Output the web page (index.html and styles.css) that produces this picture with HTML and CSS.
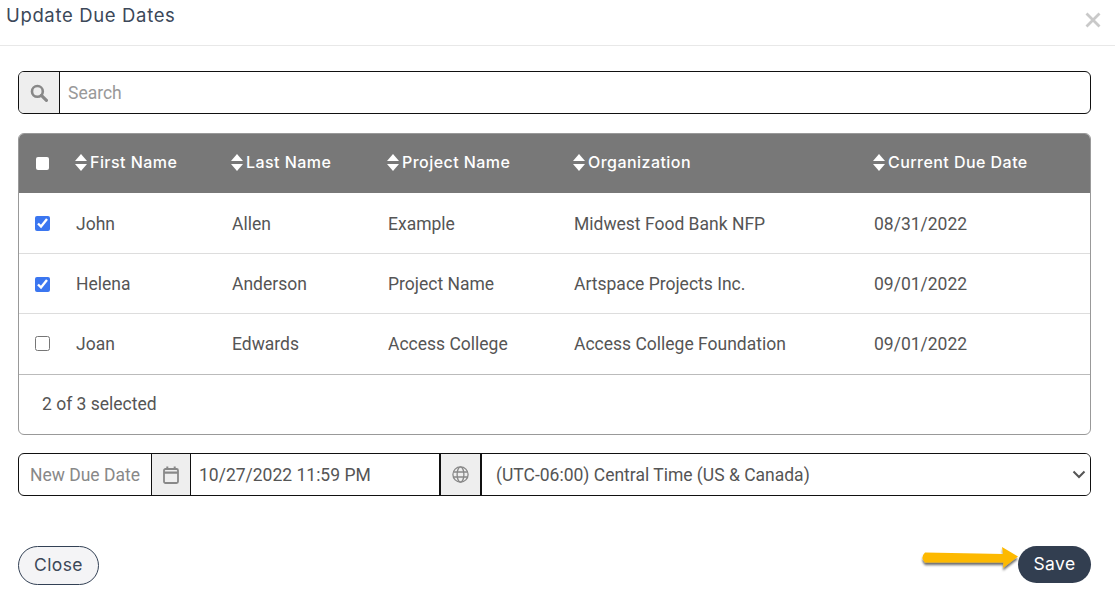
FILE: index.html
```html
<!DOCTYPE html>
<html lang="en">
<head>
    <meta charset="UTF-8">
    <meta name="viewport" content="width=device-width, initial-scale=1.0">
    <title>Update Due Dates</title>
    <link rel="stylesheet" href="styles.css">
</head>
<body>

    <header class="modal-header">
        <h1 class="modal-title">Update Due Dates</h1>
        <button class="close-x" type="button" aria-label="Close">
            <svg width="16" height="16" viewBox="0 0 16 16"><path d="M1.500 1.500 14.500 14.500M14.500 1.500 1.500 14.500" stroke="#c9c9c9" stroke-width="2.8" fill="none"/></svg>
        </button>
    </header>

    <main class="modal-body">
        <div class="input-group search-group">
            <span class="addon addon-search">
                <svg width="18" height="18" viewBox="0 0 18 18"><circle cx="7.400" cy="7.400" r="5.400" fill="none" stroke="#888" stroke-width="2.600"/><path d="M11.400 11.400 16.400 16.400" stroke="#888" stroke-width="3.200" stroke-linecap="round"/></svg>
            </span>
            <input class="group-input" type="text" placeholder="Search">
        </div>

        <div class="table-card">
            <table class="grid">
                <thead>
                    <tr>
                        <th class="col-check"><input class="head-check" type="checkbox"></th>
                        <th class="col-first"><span class="sort"></span>First Name</th>
                        <th class="col-last"><span class="sort"></span>Last Name</th>
                        <th class="col-project"><span class="sort"></span>Project Name</th>
                        <th class="col-org"><span class="sort"></span>Organization</th>
                        <th><span class="sort"></span>Current Due Date</th>
                    </tr>
                </thead>
                <tbody>
                    <tr>
                        <td><input class="row-check" type="checkbox" checked></td>
                        <td>John</td>
                        <td>Allen</td>
                        <td>Example</td>
                        <td>Midwest Food Bank NFP</td>
                        <td>08/31/2022</td>
                    </tr>
                    <tr>
                        <td><input class="row-check" type="checkbox" checked></td>
                        <td>Helena</td>
                        <td>Anderson</td>
                        <td>Project Name</td>
                        <td>Artspace Projects Inc.</td>
                        <td>09/01/2022</td>
                    </tr>
                    <tr>
                        <td><input class="row-check" type="checkbox"></td>
                        <td>Joan</td>
                        <td>Edwards</td>
                        <td>Access College</td>
                        <td>Access College Foundation</td>
                        <td>09/01/2022</td>
                    </tr>
                </tbody>
            </table>
            <div class="table-footer">2 of 3 selected</div>
        </div>

        <div class="input-group date-group">
            <span class="addon-label">New Due Date</span>
            <span class="addon addon-cal">
                <svg width="16" height="18" viewBox="0 0 16 18"><rect x="1" y="3" width="14" height="14" rx="1.500" fill="#eee" stroke="#888" stroke-width="1.800"/><path d="M1 6.600H15" stroke="#888" stroke-width="2.200"/><path d="M4.300 .5V3.500M11.700 .5V3.500" stroke="#888" stroke-width="2"/></svg>
            </span>
            <input class="group-input date-input" type="text" value="10/27/2022 11:59 PM">
            <span class="addon addon-globe">
                <svg width="17" height="17" viewBox="0 0 17 17" fill="none" stroke="#888" stroke-width="1.300"><circle cx="8.500" cy="8.500" r="7.600"/><ellipse cx="8.500" cy="8.500" rx="3.400" ry="7.600"/><path d="M1.400 6H15.600M1.400 11H15.600"/></svg>
            </span>
            <div class="tz-wrap">
                <select class="tz-select">
                    <option>(UTC-06:00) Central Time (US &amp; Canada)</option>
                </select>
                <svg class="tz-chevron" width="14" height="9" viewBox="0 0 14 9"><path d="M1.500 1.500 7 7 12.500 1.500" fill="none" stroke="#555" stroke-width="2"/></svg>
            </div>
        </div>
    </main>

    <footer class="modal-footer">
        <button class="btn btn-close" type="button">Close</button>
        <button class="btn btn-save" type="button">Save</button>
        <!-- arrow pointing at the save button -->
        <svg class="arrow" width="102" height="34" viewBox="0 0 102 34">
            <defs>
                <filter id="arrowShadow" x="-10%" y="-30%" width="120%" height="170%">
                    <feDropShadow dx="0" dy="2.500" stdDeviation="1.300" flood-color="#000" flood-opacity="0.6"/>
                </filter>
            </defs>
            <path d="M6 10.500 84 12 83 5 99 14.500 84 26 84.500 20.500 6 20.500Q1 15.500 6 10.500Z" fill="#fdb900" filter="url(#arrowShadow)"/>
        </svg>
    </footer>

</body>
</html>
```

FILE: styles.css
```css
* {
    box-sizing: border-box;
}

body {
    font-family: Roboto, "Liberation Sans", sans-serif;
    margin: 0;
    padding: 0;
    background-color: #fff;
    color: #555;
    font-size: 17.5px;
    overflow: hidden;
}

.modal-header {
    height: 46px;
    border-bottom: 1px solid #e8e8e8;
    display: flex;
    justify-content: space-between;
    padding: 0 14px 0 6px;
}

.modal-title {
    margin: 3px 0 0;
    font-family: Inter, "Open Sans", sans-serif;
    font-size: 18.5px;
    line-height: 24px;
    font-weight: 400;
    letter-spacing: 0.65px;
    color: #3c4859;
}

.close-x {
    border: none;
    background: none;
    padding: 0;
    margin-top: 12px;
    height: 16px;
}

.modal-body {
    padding: 25px 24px 0 18px;
}

.input-group {
    display: flex;
    height: 43px;
    border: 1.5px solid #111;
    border-radius: 6px;
    overflow: hidden;
    background-color: #fff;
}

.addon {
    display: flex;
    align-items: center;
    justify-content: center;
    background-color: #eee;
    flex: none;
}

.addon-search {
    width: 41px;
    border-right: 1.5px solid #111;
}

.group-input {
    flex: 1;
    min-width: 0;
    border: none;
    outline: none;
    font: inherit;
    color: #555;
    padding: 0 8px;
    background: transparent;
}

.group-input::placeholder {
    color: #999;
}

.table-card {
    margin-top: 19px;
    border: 1px solid #999;
    border-radius: 6px;
    overflow: hidden;
}

.grid {
    width: 100%;
    border-collapse: collapse;
    table-layout: fixed;
}

.grid th {
    height: 59px;
    background-color: #787878;
    color: #fff;
    text-align: left;
    padding: 0 0 4px 15px;
    font-family: Inter, "Open Sans", sans-serif;
    font-size: 16px;
    font-weight: 500;
    letter-spacing: 0.45px;
    white-space: nowrap;
}

.grid td {
    height: 60px;
    padding: 2px 0 0 16px;
    border-top: 1px solid #ddd;
    white-space: nowrap;
}

.grid tr:first-child td {
    border-top: none;
}

.grid tr:last-child td {
    height: 61px;
    padding-top: 1px;
    padding-bottom: 1px;
}

.grid .col-check {
    width: 41px;
}

.col-first,
.col-last {
    width: 156px;
}

.col-project {
    width: 186px;
}

.col-org {
    width: 300px;
}

.sort {
    display: inline-block;
    width: 13px;
    height: 17px;
    margin-right: 2px;
    vertical-align: -3px;
    position: relative;
}

.sort::before,
.sort::after {
    content: "";
    position: absolute;
    left: 0;
    border-left: 6.5px solid transparent;
    border-right: 6.5px solid transparent;
}

.sort::before {
    top: 0;
    border-bottom: 7px solid #fff;
}

.sort::after {
    bottom: 0;
    border-top: 7px solid #fff;
}

.head-check,
.row-check {
    display: block;
    width: 15px;
    height: 15px;
    margin: 0;
    accent-color: #3b76f0;
}

.head-check {
    margin: 3px 0 0 2px;
    width: 13px;
    height: 13px;
    appearance: none;
    background-color: #fff;
    border-radius: 2px;
}

.table-footer {
    height: 60px;
    border-top: 1px solid #bbb;
    padding: 0 0 2px 23px;
    display: flex;
    align-items: center;
}

.date-group {
    margin-top: 18px;
    height: 43px;
}

.addon-label {
    width: 132px;
    flex: none;
    display: flex;
    align-items: center;
    justify-content: center;
    color: #888;
}

.addon-cal {
    width: 40px;
    border-left: 1.5px solid #111;
    border-right: 1.5px solid #111;
}

.date-input {
    flex: none;
    width: 248px;
}

.addon-globe {
    width: 43px;
    border-left: 2px solid #111;
    border-right: 2px solid #111;
}

.tz-wrap {
    flex: 1;
    min-width: 0;
    position: relative;
}

.tz-select {
    width: 100%;
    height: 100%;
    border: none;
    outline: none;
    font: inherit;
    color: #555;
    background: #fff;
    padding-left: 14px;
    appearance: none;
}

.tz-chevron {
    position: absolute;
    right: 4px;
    top: 16px;
}

.modal-footer {
    position: relative;
    display: flex;
    justify-content: space-between;
    align-items: flex-start;
    padding: 50px 24px 0 18px;
}

.btn {
    font-family: Inter, "Open Sans", sans-serif;
    font-size: 17.5px;
    letter-spacing: 0.4px;
    border-radius: 20px;
    padding: 0 0 3px;
    cursor: pointer;
}

.btn-close {
    width: 81px;
    height: 39px;
    background-color: #f4f4f6;
    border: 1px solid #334155;
    color: #3c4859;
}

.btn-save {
    width: 73px;
    height: 37px;
    background-color: #323e50;
    border: none;
    color: #fff;
}

.arrow {
    position: absolute;
    right: 94px;
    top: 46px;
}
```
